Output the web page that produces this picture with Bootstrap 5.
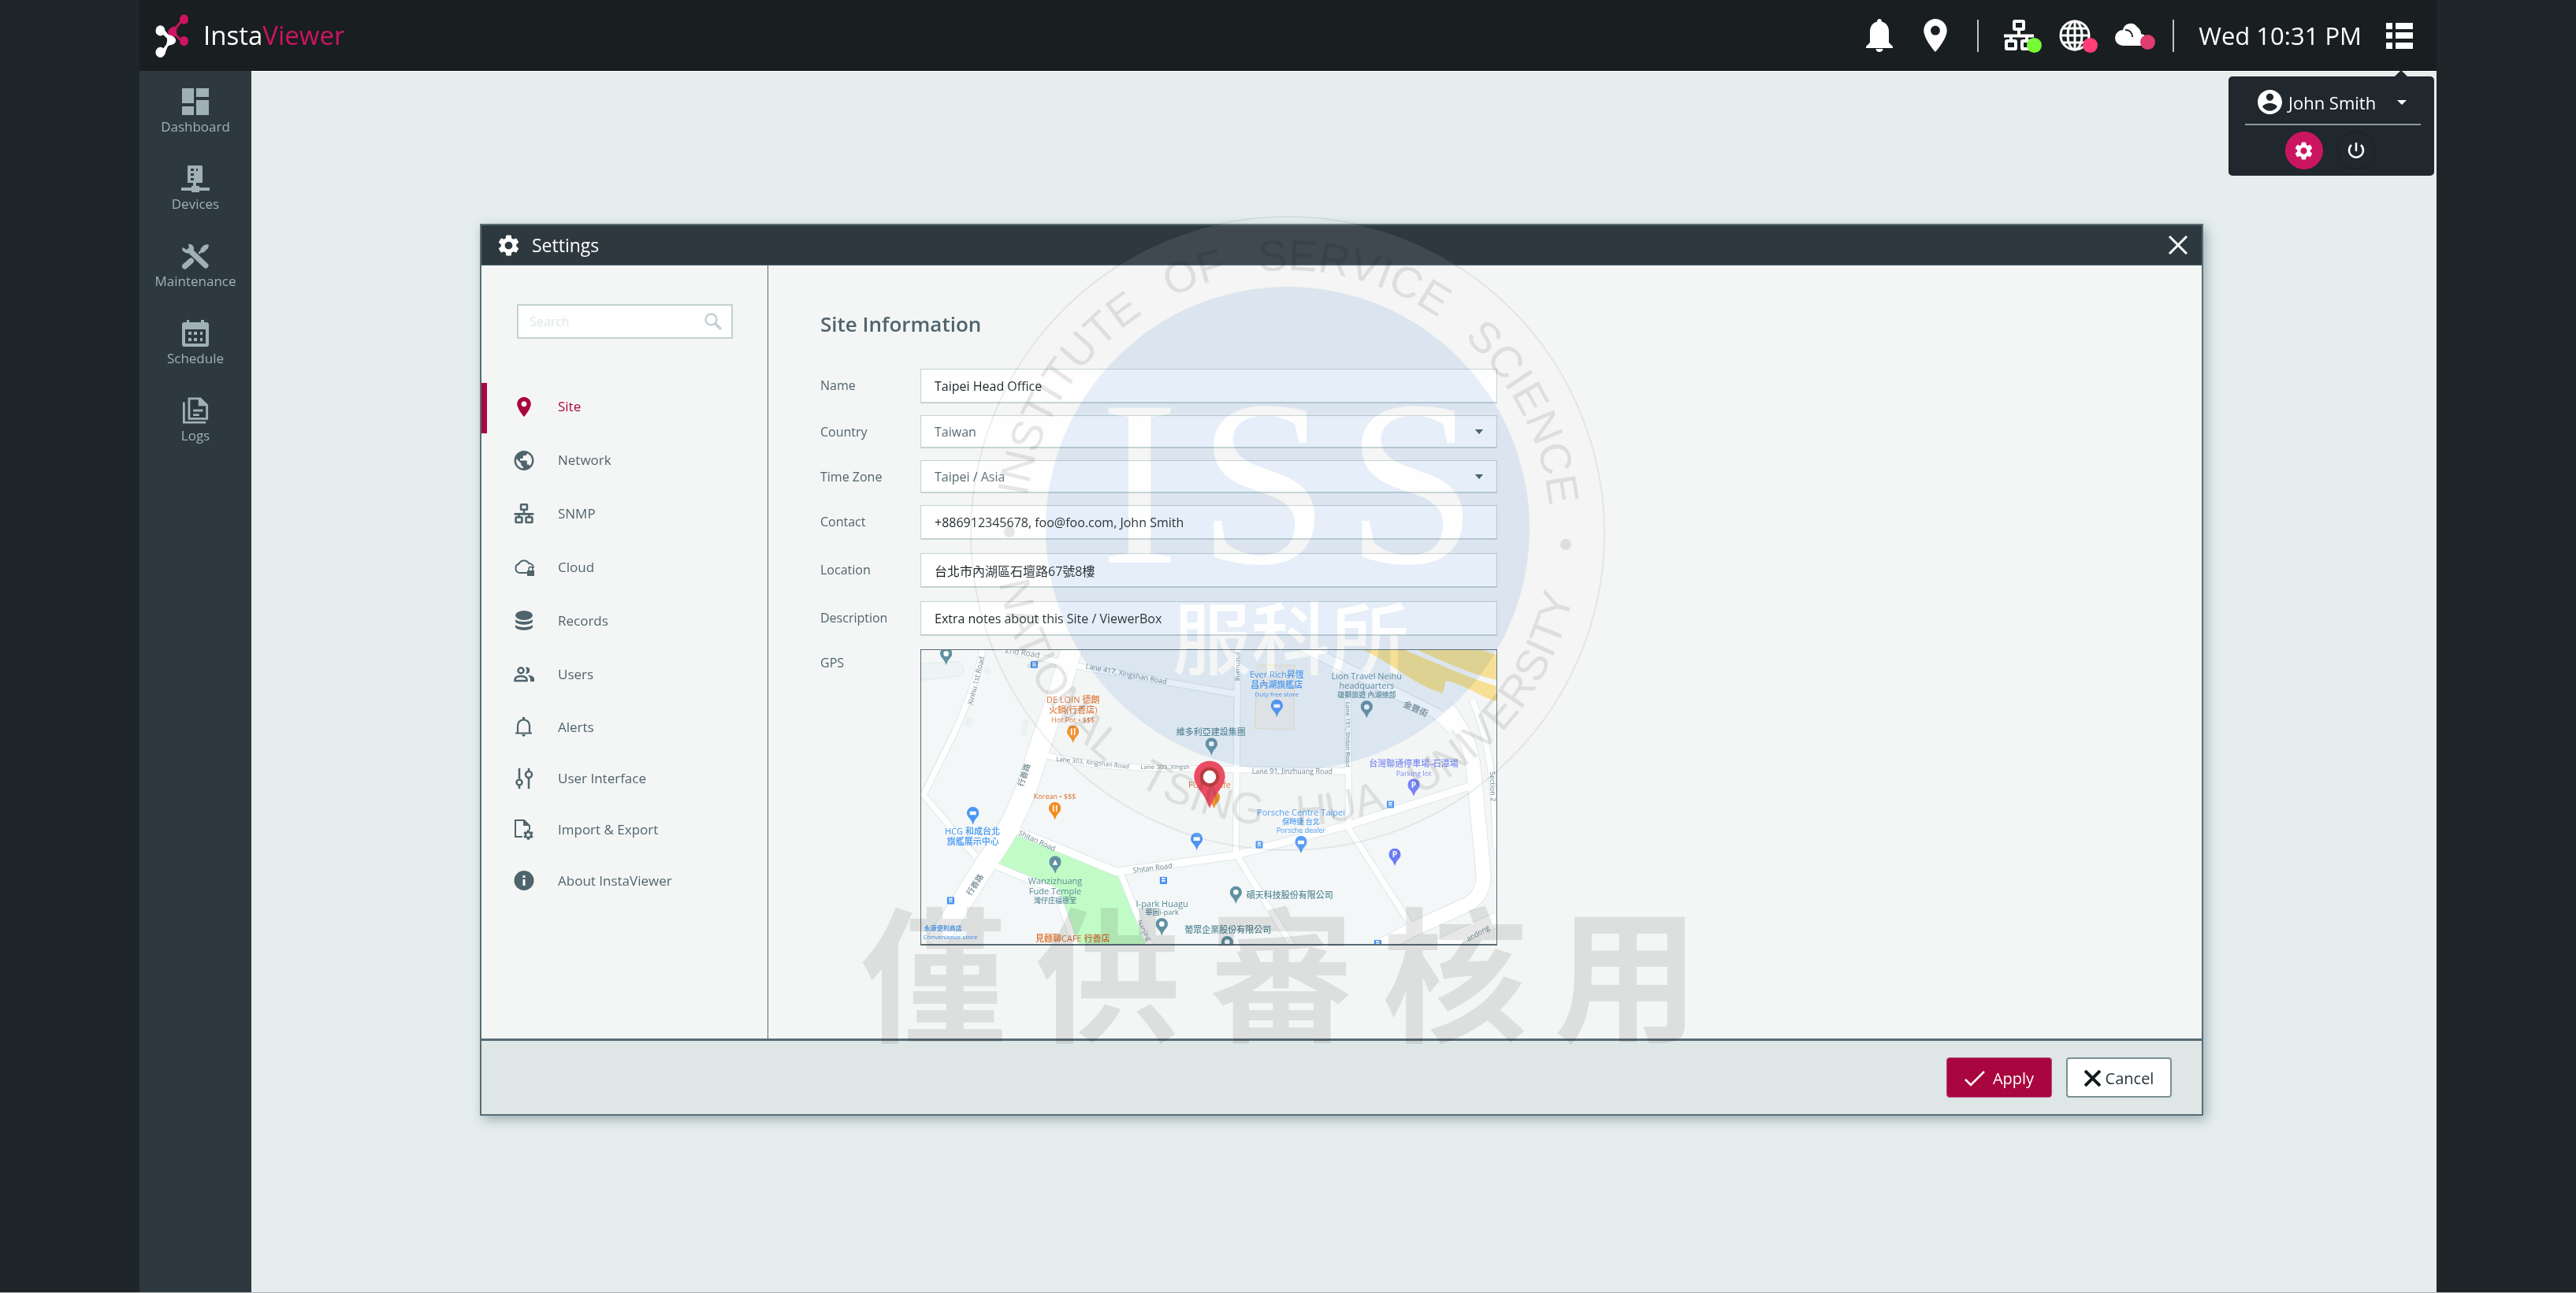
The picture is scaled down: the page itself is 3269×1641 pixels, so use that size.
<!DOCTYPE html>
<html lang="en">
<head>
<meta charset="utf-8">
<meta name="viewport" content="width=device-width, initial-scale=1">
<title>InstaViewer – Settings</title>
<link href="https://cdn.jsdelivr.net/npm/bootstrap@5.3.0/dist/css/bootstrap.min.css" rel="stylesheet">
<style>
  :root {
    --ink: #1f2629; --bar: #191e20; --slate: #2e393f; --line: #586c75; --soft: #c3d1d2;
    --pink: #cc1560; --wine: #a9063f; --label: #4f646d;
  }
  body { background: var(--ink); font-family: "Open Sans", "Noto Sans CJK TC", sans-serif; font-size: 17px; line-height: 22px; color: #1b2326; border-bottom: 1px solid #b0b5b6; }
  svg { display: block; }
  .shell { margin: 0 177px; min-height: calc(100vh - 1px); }
  .topbar { height: 90px; background: var(--bar); color: #fff; padding: 0 30px 0 20px; }
  .brandmark { font-size: 33px; line-height: 40px; color: #fff; text-decoration: none; gap: 18px; }
  .brandmark span span { color: var(--pink); }
  .tools { gap: 31px; }
  .tools-start { gap: 37px; }
  .toolbtn { background: none; border: 0; padding: 0; position: relative; color: #fff; }
  .dot { position: absolute; width: 19px; height: 19px; border-radius: 50%; right: -9px; bottom: -2px; background: #ff3d77; }
  .dot-ok { background: #74fb35; }
  .dot-dim { background: #df3c70; }
  .vline { width: 2px; height: 41px; background: #b9c3c5; }
  .clock { font-size: 31px; line-height: 40px; }
  .rail { width: 142px; background: var(--slate); padding-top: 22px; }
  .rail a { color: #9fb1b7; text-decoration: none; padding-bottom: 38px; gap: 4px; }
  .rail svg { height: 34px; }
  .stage { background: #e5eeed; border-top: 1px solid #fff; padding: 193px 296px 220px 290px; }
  .usermenu { position: absolute; right: 3px; top: 6px; width: 261px; height: 126px; background: #20272d; border-radius: 5px; color: #fff; padding: 17px 17px 0 21px; }
  .usermenu::before { content: ""; position: absolute; right: 34px; top: -8px; border: 8px solid transparent; border-top: 0; border-bottom-color: #20272d; }
  .userrow { border: 0; border-bottom: 2px solid #87999b; background: none; color: #fff; font-size: 22px; line-height: 30px; padding: 0 18px 12px 15px; gap: 7px; }
  .userkeys { gap: 18px; padding: 8px 8px 0 0; }
  .roundbtn { width: 48px; height: 48px; border-radius: 50%; border: 1px solid #1a2024; background: none; color: #fff; padding: 0; }
  .roundbtn.on { background: var(--pink); border-color: var(--pink); }
  .pane { border: 2px solid var(--line); box-shadow: 4px 5px 14px rgba(70, 95, 105, .45); background: #f4f6f5; position: relative; }
  .pane-head { height: 51px; background: var(--slate); color: #fff; border-bottom: 1px solid var(--line); padding: 0 18px 0 21px; }
  .pane-head h1 { font-size: 23px; line-height: 30px; font-weight: 400; }
  .pane-foot { background: #dee6e6; border-top: 3px solid var(--line); padding: 21px 38px 21px 0; gap: 18px; }
  .act { height: 51px; width: 134px; border-radius: 4px; font-size: 20px; line-height: 28px; padding: 2px 0 0; }
  .act-apply { background: var(--wine); border: 1px solid #b54a7d; color: #fff; gap: 10px; }
  .act-cancel { background: #fff; border: 2px solid #7c9094; color: #27343a; gap: 6px; }
  .side { width: 364px; border-right: 1px solid var(--line); padding-top: 49px; }
  .searchbox { margin: 0 44px 52px 45px; height: 44px; border: 2px solid var(--soft); background: #fff; padding: 0 12px 0 14px; }
  .searchbox input { border: 0; outline: 0; min-width: 0; background: none; color: var(--label); font-size: 16px; }
  .searchbox input::placeholder { color: #dfe7e7; opacity: 1; }
  .menu a { height: 68px; color: var(--label); text-decoration: none; padding-left: 41px; gap: 30px; position: relative; }
  .menu li:nth-child(n+7) a { height: 65px; }
  .menu a.current { color: var(--wine); }
  .menu a.current::before { content: ""; position: absolute; left: 0; top: 4px; bottom: 0; width: 7px; background: var(--wine); }
  .sheet { padding: 56px 66px 118px 66px; }
  .sheet h2 { font-size: 26px; line-height: 36px; font-weight: 600; color: var(--label); margin-bottom: 39px; }
  .fields { display: grid; gap: 15px; max-width: 859px; }
  .fields + .fields { gap: 17px; margin-top: 17px; }
  .fieldrow { display: grid; grid-template-columns: 127px 1fr; }
  .fieldrow > label, .fieldrow > .maplabel { color: var(--label); font-size: 16px; line-height: 42px; font-weight: 500; }
  .fieldrow > .maplabel { line-height: 34px; }
  .box { height: 44px; border: 1px solid var(--soft); border-bottom-width: 2px; border-radius: 0; padding: 0 17px; font-size: 16px; background-color: #fff; color: #1b2326; }
  select.box { height: 42px; color: #566a72; background-position: right 16px center; background-size: 12px 6px;
    background-image: url("data:image/svg+xml,%3csvg xmlns='http://www.w3.org/2000/svg' viewBox='0 0 14 7'%3e%3cpath d='M1 0h12L7 7z' fill='%23425a68'/%3e%3c/svg%3e"); }
  .mapbox { border: 1px solid var(--line); border-bottom-width: 2px; }
  .mapbox svg { font-family: "Open Sans", "Noto Sans CJK TC", sans-serif; }
  .seal { position: absolute; left: 479px; top: -16px; width: 1060px; height: 1060px; pointer-events: none; }
  .seal-ink { mix-blend-mode: multiply; }
</style>
</head>
<body>
<svg width="0" height="0" class="position-absolute" aria-hidden="true">
  <defs>
    <symbol id="gear" viewBox="2 2 20 20"><path fill="currentColor" d="M19.14,12.94c0.04-0.3,0.06-0.61,0.06-0.94c0-0.32-0.02-0.64-0.07-0.94l2.03-1.58c0.18-0.14,0.23-0.41,0.12-0.61l-1.92-3.32c-0.12-0.22-0.37-0.29-0.59-0.22l-2.39,0.96c-0.5-0.38-1.03-0.7-1.62-0.94L14.4,2.81c-0.04-0.24-0.24-0.41-0.48-0.41h-3.84c-0.24,0-0.43,0.17-0.47,0.41L9.25,5.35C8.66,5.59,8.12,5.92,7.63,6.29L5.24,5.33c-0.22-0.08-0.47,0-0.59,0.22L2.74,8.87C2.62,9.08,2.66,9.34,2.86,9.48l2.03,1.58C4.84,11.36,4.8,11.69,4.8,12s0.02,0.64,0.07,0.94l-2.03,1.58c-0.18,0.14-0.23,0.41-0.12,0.61l1.92,3.32c0.12,0.22,0.37,0.29,0.59,0.22l2.39-0.96c0.5,0.38,1.03,0.7,1.62,0.94l0.36,2.54c0.05,0.24,0.24,0.41,0.48,0.41h3.84c0.24,0,0.44-0.17,0.47-0.41l0.36-2.54c0.59-0.24,1.13-0.56,1.62-0.94l2.39,0.96c0.22,0.08,0.47,0,0.59-0.22l1.92-3.32c0.12-0.22,0.07-0.47-0.12-0.61L19.14,12.94z M12,15.6c-1.98,0-3.6-1.62-3.6-3.6s1.62-3.6,3.6-3.6s3.6,1.62,3.6,3.6S13.98,15.6,12,15.6z"/></symbol>
    <symbol id="place" viewBox="5 2 14 20"><path fill="currentColor" d="M12 2C8.13 2 5 5.13 5 9c0 5.25 7 13 7 13s7-7.75 7-13c0-3.87-3.13-7-7-7zm0 9.8c-1.55 0-2.8-1.25-2.8-2.8s1.25-2.8 2.8-2.8 2.8 1.25 2.8 2.8-1.25 2.8-2.8 2.8z"/></symbol>
    <symbol id="lan" viewBox="0 0 40 40"><g fill="none" stroke="currentColor" stroke-width="4"><rect x="14" y="2" width="12" height="10" rx="1"/><path d="M20 12v8M1 20.500h38M10 20v7M30 20v7"/><rect x="4" y="27" width="12" height="10" rx="1"/><rect x="24" y="27" width="12" height="10" rx="1"/></g></symbol>
    <symbol id="pin" viewBox="0 0 46 68"><path fill="currentColor" d="M23 0A23 23 0 0 0 0 23c0 14 12 20 17 30q4 8 6 15q2-7 6-15c5-10 17-16 17-30A23 23 0 0 0 23 0z"/></symbol>
    <symbol id="bus" viewBox="0 0 28 28"><rect width="28" height="28" rx="4" fill="#3f8ef2"/><path d="M7 5h14v5H7zM7 13h14v5H7zM8 20h3v3H8zM17 20h3v3h-3z" fill="#fff"/></symbol>
  </defs>
</svg>

<div class="shell d-flex flex-column">
  <header class="topbar d-flex align-items-center justify-content-between">
    <a class="brandmark d-flex align-items-center" href="#">
      <svg width="43" height="55" viewBox="0 0 43 50" preserveAspectRatio="none" aria-hidden="true">
        <g fill="#cc1560"><circle cx="36.500" cy="6" r="5.500"/><circle cx="36.500" cy="31" r="5.500"/><path d="M34 9L28 16c-1.500 2-1 6 0 8l6 5-2 2-6-5c-3-1-8-1-10-4 0-5 5-8 10-8l6-7z"/></g>
        <g fill="#fff"><circle cx="6.500" cy="19" r="6"/><circle cx="6.500" cy="44" r="6"/><path d="M9 15l7 8c3 2 7 1 10 6 1 5-4 6-8 7-3 1-4 6-6 11l-4-5 6-7c1-3 2-6 0-8l-6-5z"/></g>
      </svg>
      <span>Insta<span>Viewer</span></span>
    </a>
    <div class="tools d-flex align-items-center">
      <div class="tools-start d-flex align-items-center">
        <button class="toolbtn" aria-label="Notifications"><svg width="36" height="42" viewBox="0 0 36 42"><path fill="#fff" d="M18 0c2 0 3 1.500 3 3.500 6 1.500 9 6.500 9 12.500v14l5 5v2H1v-2l5-5V16c0-6 3-11 9-12.500C15 1.500 16 0 18 0zM13.500 38h9c0 2.500-2 4-4.500 4s-4.500-1.500-4.500-4z"/></svg></button>
        <button class="toolbtn" aria-label="Location"><svg width="32" height="42"><use href="#place"/></svg></button>
        <span class="vline"></span>
      </div>
      <button class="toolbtn" aria-label="Local network"><svg width="40" height="40"><use href="#lan"/></svg><span class="dot dot-ok"></span></button>
      <button class="toolbtn" aria-label="Internet"><svg width="40" height="40" viewBox="0 0 40 40" fill="none" stroke="#fff" stroke-width="3"><circle cx="20" cy="20" r="18"/><ellipse cx="20" cy="20" rx="9" ry="18"/><path d="M20 2v36M2 20h36M5 11h30M5 29h30"/></svg><span class="dot"></span></button>
      <button class="toolbtn" aria-label="Cloud"><svg width="42" height="32" viewBox="0 0 42 32"><path fill="#fff" d="M10 29a10 10 0 0 1 0-20 10 10 0 0 1 18-4c4 3 5 6 5 9 5 1 8 4 8 8 0 5-4 7-8 7z"/><path d="M13 9c6 0 9 4 9 9" fill="none" stroke="#191e20" stroke-width="2"/></svg><span class="dot dot-dim"></span></button>
      <span class="vline"></span>
      <span class="clock">Wed 10:31 PM</span>
      <button class="toolbtn" aria-label="Menu"><svg width="34" height="33" viewBox="0 0 34 33"><path fill="#fff" d="M0 0h8v8H0zM12 0h22v8H12zM0 12h8v8H0zM12 12h22v8H12zM0 25h8v8H0zM12 25h22v8H12z"/></svg></button>
    </div>
  </header>

  <div class="d-flex flex-grow-1">
    <nav class="rail d-flex flex-column flex-shrink-0" aria-label="Main">
      <a class="d-flex flex-column align-items-center" href="#"><svg width="34" viewBox="0 0 34 34" fill="currentColor"><path d="M0 0h15v19H0zM18 0h16v11H18zM0 23h15v11H0zM18 15h16v19H18z"/></svg>Dashboard</a>
      <a class="d-flex flex-column align-items-center" href="#"><svg width="36" viewBox="0 0 36 34"><path fill="currentColor" fill-rule="evenodd" d="M9 0h16q2 0 2 2v20h-8v4h4v2h13v4H23v2H13v-2H0v-4h13v-2h2v-4H8V2q0-2 1-2zM12 4v3h4V4zM12 10v3h4v-3zM12 16v3h4v-3zM19 4v3h2V4z"/></svg>Devices</a>
      <a class="d-flex flex-column align-items-center" href="#"><svg width="34" viewBox="0 0 34 34"><g stroke="currentColor" fill="none" stroke-linecap="round"><path d="M30 29L12 12" stroke-width="7"/><path d="M3.500 30l8-7" stroke-width="7"/><path d="M29 6l-7 7" stroke-width="2.500"/></g><path fill="currentColor" d="M24 7l4-4 5-1 1 1-1 4-5 5-3 1-2-2zM8 2c5-1 9 4 6 9-4 4-11 3-14-2l1-3 5 3 3-3z"/></svg>Maintenance</a>
      <a class="d-flex flex-column align-items-center" href="#"><svg width="34" viewBox="0 0 34 34"><path fill="currentColor" fill-rule="evenodd" d="M6 0h3v3h15V0h4v3h3q3 0 3 3v25q0 3-3 3H3q-3 0-3-3V6q0-3 3-3h3zM4 12v18h26V12z"/><path fill="currentColor" d="M8 15h4v4H8zM15 15h4v4h-4zM23 15h3v4h-3zM8 23h4v4H8zM15 23h4v4h-4zM23 23h3v4h-3z"/></svg>Schedule</a>
      <a class="d-flex flex-column align-items-center" href="#"><svg width="34" viewBox="0 0 34 36"><g fill="none" stroke="currentColor" stroke-width="3"><path d="M8.500 2h15l9 9v18h-24zM1.500 7v27H31"/><path d="M14 18h13M14 24h8"/></g><path fill="currentColor" d="M21 2h4l8 8v2H21z"/></svg>Logs</a>
    </nav>

    <main class="stage flex-grow-1 position-relative">
      <div class="usermenu">
        <button class="userrow d-flex align-items-center w-100">
          <svg width="33" height="31" viewBox="2 2 20 20" fill="#fff"><path d="M12 2C6.480 2 2 6.480 2 12s4.480 10 10 10 10-4.480 10-10S17.520 2 12 2zm0 3c1.660 0 3 1.340 3 3s-1.340 3-3 3-3-1.340-3-3 1.340-3 3-3zm0 14.200c-2.500 0-4.710-1.280-6-3.220.03-1.990 4-3.080 6-3.080 1.990 0 5.970 1.090 6 3.080-1.290 1.940-3.500 3.220-6 3.220z"/></svg>
          <span>John Smith</span>
          <svg class="ms-auto" width="12" height="6" viewBox="0 0 12 6" fill="#fff"><path d="M0 0h12L6 6z"/></svg>
        </button>
        <div class="userkeys d-flex justify-content-center">
          <button class="roundbtn on d-flex align-items-center justify-content-center" aria-label="Settings"><svg width="23" height="23"><use href="#gear"/></svg></button>
          <button class="roundbtn d-flex align-items-center justify-content-center" aria-label="Power"><svg width="24" height="24" viewBox="0 0 24 24" fill="none" stroke="#fff" stroke-width="2.500"><path d="M12 2v11M6 5a9 9 0 1 0 12 0"/></svg></button>
        </div>
      </div>

      <section class="pane">
        <div class="pane-head d-flex align-items-center justify-content-between">
          <div class="d-flex align-items-center gap-3">
            <svg width="27" height="29"><use href="#gear"/></svg>
            <h1 class="m-0">Settings</h1>
          </div>
          <button class="toolbtn" aria-label="Close"><svg width="24" height="24" viewBox="0 0 24 24" stroke="#fff" stroke-width="3"><path d="M1 1l22 22M23 1L1 23"/></svg></button>
        </div>

        <div class="d-flex">
          <div class="side flex-shrink-0">
            <div class="searchbox d-flex align-items-center">
              <input class="flex-grow-1 p-0" type="search" placeholder="Search" aria-label="Search">
              <svg width="22" height="22" viewBox="0 0 22 22" fill="none" stroke="#c3d1d2"><circle cx="8.500" cy="8.500" r="7" stroke-width="2.500"/><path d="M14 14l7 7" stroke-width="3.500"/></svg>
            </div>
            <ul class="menu list-unstyled m-0">
              <li><a class="current d-flex align-items-center" href="#"><svg width="26" height="25"><use href="#place"/></svg>Site</a></li>
              <li><a class="d-flex align-items-center" href="#"><svg width="26" height="25" viewBox="2 2 20 20" fill="currentColor"><path d="M12 2C6.480 2 2 6.480 2 12s4.480 10 10 10 10-4.480 10-10S17.520 2 12 2zm-1 17.930c-3.950-.49-7-3.850-7-7.930 0-.62.08-1.210.21-1.790L9 15v1c0 1.100.9 2 2 2v1.930zm6.900-2.540c-.26-.81-1-1.390-1.900-1.390h-1v-3c0-.55-.45-1-1-1H8v-2h2c.55 0 1-.45 1-1V7h2c1.100 0 2-.9 2-2v-.41c2.930 1.190 5 4.060 5 7.410 0 2.080-.8 3.970-2.100 5.390z"/></svg>Network</a></li>
              <li><a class="d-flex align-items-center" href="#"><svg width="26" height="26"><use href="#lan"/></svg>SNMP</a></li>
              <li><a class="d-flex align-items-center" href="#"><svg width="26" height="24" viewBox="0 0 26 24"><path d="M17 19H7a6 6 0 0 1-.5-11.500A7 7 0 0 1 19 7c4 0 6 3 6 6" fill="none" stroke="currentColor" stroke-width="2"/><path d="M19 16v-2a2.500 2.500 0 0 1 5 0v2" fill="none" stroke="currentColor" stroke-width="1.500"/><path fill="currentColor" d="M17 16h9v7h-9z"/></svg>Cloud</a></li>
              <li><a class="d-flex align-items-center" href="#"><svg width="26" height="26" viewBox="0 0 26 26" fill="currentColor"><ellipse cx="13" cy="6" rx="11" ry="6"/><path d="M2 11c3 4 19 4 22 0v3c-3 5-19 5-22 0zM2 18c3 4 19 4 22 0v3c-3 5-19 5-22 0z"/></svg>Records</a></li>
              <li><a class="d-flex align-items-center" href="#"><svg width="26" height="20" viewBox="0 0 26 20"><g fill="none" stroke="currentColor" stroke-width="2.500"><circle cx="9" cy="5" r="3.500"/><path d="M1.500 18v-2c1-5 14-5 15 0v2z"/></g><path fill="currentColor" d="M15 1c7-2 7 9 0 8q3-4 0-8zM18 11c5 0 8 2 8 5v3h-5v-3q0-3-3-5z"/></svg>Users</a></li>
              <li><a class="d-flex align-items-center" href="#"><svg width="26" height="25" viewBox="0 0 26 25"><path d="M5 20V11c0-10 15-10 15 0v9M2 20.500h21" fill="none" stroke="currentColor" stroke-width="2.200"/><path fill="currentColor" d="M11 0h3v4h-3zM10 22h5q-1 3-2.500 3T10 22z"/></svg>Alerts</a></li>
              <li><a class="d-flex align-items-center" href="#"><svg width="26" height="26" viewBox="0 0 26 26" fill="none" stroke="currentColor" stroke-width="2.500"><path d="M7 0v13M7 22v4M19 0v4M19 12v14"/><circle cx="7" cy="18" r="3.500"/><circle cx="19" cy="8" r="4"/></svg>User Interface</a></li>
              <li><a class="d-flex align-items-center" href="#"><svg width="26" height="26" viewBox="0 0 26 26"><path d="M11 22H2V1h11l7 7v5" fill="none" stroke="currentColor" stroke-width="2"/><path d="M12 0l8 8h-8z" fill="currentColor"/><svg x="12" y="13" width="13" height="13"><use href="#gear"/></svg></svg>Import &amp; Export</a></li>
              <li><a class="d-flex align-items-center" href="#"><svg width="26" height="25" viewBox="0 0 26 25"><circle cx="13" cy="12.500" r="12.500" fill="currentColor"/><path d="M11.500 6h3v3h-3zM11.500 11h3v8h-3z" fill="#fff"/></svg>About InstaViewer</a></li>
            </ul>
          </div>

          <form class="sheet flex-grow-1">
            <h2>Site Information</h2>
            <div class="fields">
              <div class="fieldrow"><label for="f-name">Name</label><input id="f-name" class="form-control box" type="text" value="Taipei Head Office"></div>
              <div class="fieldrow"><label for="f-country">Country</label><select id="f-country" class="form-select box"><option>Taiwan</option></select></div>
              <div class="fieldrow"><label for="f-zone">Time Zone</label><select id="f-zone" class="form-select box"><option>Taipei / Asia</option></select></div>
              <div class="fieldrow"><label for="f-contact">Contact</label><input id="f-contact" class="form-control box" type="text" value="+886912345678, foo@foo.com, John Smith"></div>
            </div>
            <div class="fields">
              <div class="fieldrow"><label for="f-loc">Location</label><input id="f-loc" class="form-control box" type="text" value="台北市內湖區石壇路67號8樓"></div>
              <div class="fieldrow"><label for="f-desc">Description</label><input id="f-desc" class="form-control box" type="text" value="Extra notes about this Site / ViewerBox"></div>
              <div class="fieldrow">
                <span class="maplabel">GPS</span>
                <div class="mapbox">
                  <svg width="100%" viewBox="27 48 2190 1119" role="img" aria-label="Map of the site">
                    <rect x="0" y="0" width="2300" height="1200" fill="#f4f7f7"/>
                    <path d="M27 100L160 92q30 8 30 30t-30 27L27 163z" fill="#eef4f3" stroke="#dcebe9" stroke-width="3"/>
                    <path d="M415 310l22 4-12 62-22-6zM200 302l26 8-10 34-24-8zM268 110l24 6-4 26-22-4z" fill="#eaf1f1"/>
                    <path d="M1307 105h142l-4 247-148-6z" fill="#f6f2ec" stroke="#f3e5c0" stroke-width="3"/>
                    <path d="M385 735L770 900 890 1170H625L540 955 310 862z" fill="#c1fcc6"/>
                    <g fill="none" stroke-linejoin="round">
                      <g stroke="#dde7e9">
                        <path stroke-width="28" d="M262 40L245 120Q210 240 150 370L36 600 235 835M300 35L600 105 1220 215M505 450Q700 500 1060 500L1650 510M1232 40L1225 830M1652 235L1655 720M310 870L540 965 615 1175M1230 830L1440 1175M1650 720L1895 1100M2125 240Q2210 420 2215 800M785 895L900 1180"/>
                        <path stroke-width="34" d="M390 735L770 892 1220 830 1650 715 2130 562"/>
                        <path stroke-width="44" d="M1470 30L1990 290 2050 350"/>
                        <path stroke-width="60" d="M2030 270C2110 380 2130 440 2135 560L2168 900Q2170 980 2110 1015L1890 1115 1780 1175M2217 1075L2000 1175"/>
                        <path stroke-width="84" d="M600 40C560 200 500 350 470 440 430 590 370 730 280 850L80 1170"/>
                      </g>
                      <g stroke="#fff">
                        <path stroke-width="22" d="M262 40L245 120Q210 240 150 370L36 600 235 835M300 35L600 105 1220 215M505 450Q700 500 1060 500L1650 510M1232 40L1225 830M1652 235L1655 720M310 870L540 965 615 1175M1230 830L1440 1175M1650 720L1895 1100M2125 240Q2210 420 2215 800M785 895L900 1180"/>
                        <path stroke-width="28" d="M390 735L770 892 1220 830 1650 715 2130 562"/>
                        <path stroke-width="38" d="M1470 30L1990 290 2050 350"/>
                        <path stroke-width="54" d="M2030 270C2110 380 2130 440 2135 560L2168 900Q2170 980 2110 1015L1890 1115 1780 1175M2217 1075L2000 1175"/>
                        <path stroke-width="78" d="M600 40C560 200 500 350 470 440 430 590 370 730 280 850L80 1170"/>
                      </g>
                    </g>
                    <path fill="#f8df8c" d="M1710 40H1850C1970 90 2100 150 2217 185V243C2140 220 2100 180 2025 165L2012 212C1900 180 1840 110 1710 47zM1915 40H2140L2217 66V162C2120 140 2010 90 1915 47z"/>
                    <g fill="#6b848b" font-size="30" font-weight="500">
                      <text transform="translate(222 258) rotate(-76)" font-size="27">Xinhu 1st Road</text>
                      <text transform="translate(345 56) rotate(10)">2nd Road</text>
                      <text transform="translate(652 118) rotate(11)" font-size="27">Lane 417, Xingshan Road</text>
                      <text transform="translate(540 470) rotate(6)" font-size="24">Lane 303, Xingshan Road</text>
                      <text x="862" y="502" font-size="24">Lane 303, Xingsh</text>
                      <text transform="translate(415 570) rotate(-72)">行善路</text>
                      <text transform="translate(215 985) rotate(-56)">行善路</text>
                      <text transform="translate(396 750) rotate(25)" font-size="27">Shitan Road</text>
                      <text transform="translate(834 896) rotate(-7)" font-size="27">Shitan Road</text>
                      <text transform="translate(850 1080) rotate(64)" font-size="24">Nanjing</text>
                      <text transform="translate(1226 56) rotate(90)" font-size="24">Jinzhuang</text>
                      <text x="1286" y="518" font-size="27">Lane 91, Jinzhuang Road</text>
                      <text transform="translate(1644 245) rotate(90)" font-size="24">Lane 151, Shitan Road</text>
                      <text transform="translate(1860 262) rotate(24)" font-size="33">金豐街</text>
                      <text transform="translate(2192 510) rotate(88)" font-size="27">Section 2</text>
                      <text transform="translate(2110 1158) rotate(-30)" font-size="27">andong</text>
                    </g>
                    <g color="#4b96f3">
                      <use href="#pin" x="201" y="645" width="46" height="68"/><use href="#pin" x="1053" y="743" width="46" height="68"/><use href="#pin" x="1358" y="236" width="46" height="68"/><use href="#pin" x="1450" y="755" width="46" height="68"/>
                    </g>
                    <path fill="#fff" d="M212 662h24v14h-24zM1064 760h24v14h-24zM1369 254h24v14h-24zM1461 773h24v14h-24z"/>
                    <g color="#6191a0">
                      <use href="#pin" x="99" y="38" width="46" height="68"/><use href="#pin" x="1109" y="382" width="46" height="68"/><use href="#pin" x="514" y="832" width="46" height="68"/><use href="#pin" x="920" y="1068" width="46" height="68"/><use href="#pin" x="1700" y="240" width="46" height="68"/><use href="#pin" x="1202" y="947" width="46" height="68"/><use href="#pin" x="1169" y="1137" width="46" height="68"/>
                    </g>
                    <g fill="#fff"><circle cx="122" cy="62" r="10"/><circle cx="1132" cy="405" r="10"/><path d="M527 866l10-20 10 20z"/><circle cx="943" cy="1091" r="10"/><circle cx="1723" cy="265" r="10"/><circle cx="1225" cy="970" r="10"/><circle cx="1192" cy="1160" r="10"/></g>
                    <g color="#f08a1d"><use href="#pin" x="582" y="335" width="46" height="68"/><use href="#pin" x="513" y="627" width="46" height="68"/><use href="#pin" x="1119" y="585" width="46" height="68"/></g>
                    <g stroke="#fff" stroke-width="5"><path d="M599 346v26M611 346v26M530 638v26M542 638v26"/></g>
                    <g color="#6a7cf5"><use href="#pin" x="1879" y="538" width="46" height="68"/><use href="#pin" x="1807" y="803" width="46" height="68"/></g>
                    <g fill="#fff" font-size="30" font-weight="700" text-anchor="middle"><text x="1902" y="572">P</text><text x="1830" y="837">P</text></g>
                    <use href="#bus" x="443" y="90" width="28" height="28"/><use href="#bus" x="125" y="988" width="28" height="28"/><use href="#bus" x="935" y="911" width="28" height="28"/><use href="#bus" x="1799" y="622" width="28" height="28"/><use href="#bus" x="1300" y="775" width="28" height="28"/><use href="#bus" x="1751" y="1151" width="28" height="28"/>
                    <g text-anchor="middle" font-size="33" font-weight="500">
                      <g fill="#dc6f2c"><text x="605" y="249">DE LOIN 德朗</text><text x="605" y="289">火鍋(行善店)</text><text x="605" y="323" font-size="27">Hot Pot • $$$</text><text x="536" y="614" font-size="27">Korean • $$$</text><text x="1125" y="574">FUJIN Cafe</text><text x="604" y="1158">見麵聊CAFE 行善店</text></g>
                      <g fill="#3f96f4"><text x="222" y="750">HCG 和成台北</text><text x="224" y="790">旗艦展示中心</text><text x="110" y="1116" font-size="24">永康便利商店</text><text x="138" y="1149" font-size="24">Convenience store</text><text x="1381" y="152">Ever Rich昇恆</text><text x="1381" y="193">昌內湖旗艦店</text><text x="1381" y="225" font-size="24">Duty free store</text><text x="1473" y="679">Porsche Centre Taipei</text><text x="1473" y="712" font-size="27">保時捷 台北</text><text x="1473" y="743" font-size="27">Porsche dealer</text></g>
                      <g fill="#5a8b98"><text x="537" y="938">Wanzizhuang</text><text x="537" y="977">Fude Temple</text><text x="537" y="1011" font-size="27">灣仔庄福德堂</text><text x="944" y="1025">I-park Huagu</text><text x="944" y="1057" font-size="27">華固i-park</text><text x="1130" y="371">維多利亞建設集團</text><text x="1723" y="158">Lion Travel Neihu</text><text x="1723" y="196">headquarters</text><text x="1723" y="229" font-size="27">雄獅旅遊 內湖總部</text><text x="1430" y="994">碩天科技股份有限公司</text><text x="1195" y="1124">葡眾企業股份有限公司</text></g>
                      <g fill="#7383f0"><text x="1902" y="493">台灣聯通停車場-石潭場</text><text x="1902" y="527" font-size="27">Parking lot</text></g>
                    </g>
                    <path fill="#e93d55" d="M1125 470c-33 0-59 26-59 59 0 38 36 62 50 100q5 12 9 21 4-9 9-21c14-38 50-62 50-100 0-33-26-59-59-59z"/>
                    <circle cx="1125" cy="531" r="31" fill="#fff" stroke="#b52a31" stroke-width="13"/>
                  </svg>
                </div>
              </div>
            </div>
          </form>
        </div>

        <div class="pane-foot d-flex justify-content-end">
          <button class="act act-apply d-flex align-items-center justify-content-center"><svg width="26" height="20" viewBox="0 0 26 20" fill="none" stroke="#fff" stroke-width="2.500"><path d="M1 11l7 7L25 1"/></svg>Apply</button>
          <button class="act act-cancel d-flex align-items-center justify-content-center"><svg width="21" height="21" viewBox="0 0 21 21" stroke="#111a1d" stroke-width="4"><path d="M1 1l19 19M20 1L1 20"/></svg>Cancel</button>
        </div>

        <svg class="seal" viewBox="1090 270 1060 1060" aria-hidden="true"><circle cx="1634" cy="677" r="402" fill="#f4f6f5" fill-opacity=".09"/></svg>
        <svg class="seal seal-ink" viewBox="1090 270 1060 1060">
          <defs>
            <path id="arcTop" d="M1300 677A334 334 0 0 1 1968 677"/>
            <path id="arcLow" d="M1263 677A371 371 0 0 0 2005 677"/>
          </defs>
          <circle cx="1634" cy="677" r="402" fill="none" stroke="#eeefef" stroke-width="2"/>
          <circle cx="1634" cy="671" r="307" fill="#e6effa"/>
          <g fill="#e7e7e7">
            <circle cx="1281" cy="675" r="7"/><circle cx="1987" cy="691" r="7"/>
            <g font-family="Liberation Sans, Arial, sans-serif" font-size="55" text-anchor="middle">
              <text><textPath href="#arcTop" startOffset="18%">INSTITUTE</textPath></text>
              <text><textPath href="#arcTop" startOffset="39%">OF</textPath></text>
              <text><textPath href="#arcTop" startOffset="58%">SERVICE</textPath></text>
              <text><textPath href="#arcTop" startOffset="85%">SCIENCE</textPath></text>
              <text><textPath href="#arcLow" startOffset="17%">NATIONAL</textPath></text>
              <text><textPath href="#arcLow" startOffset="40%">TSING</textPath></text>
              <text><textPath href="#arcLow" startOffset="56%">HUA</textPath></text>
              <text><textPath href="#arcLow" startOffset="79%">UNIVERSITY</textPath></text>
            </g>
            <text x="1093 1314 1534 1754 1972" y="1308" font-family="Noto Sans CJK TC, sans-serif" font-weight="700" font-size="184">僅供審核用</text>
          </g>
          <g fill="#fff">
            <text x="1396 1520 1708" y="714" font-family="Liberation Serif, Times New Roman, serif" font-size="300">ISS</text>
            <text x="1638" y="848" text-anchor="middle" font-family="Noto Sans CJK TC, sans-serif" font-weight="500" font-size="100">服科所</text>
          </g>
        </svg>
      </section>
    </main>
  </div>
</div>
<script src="https://cdn.jsdelivr.net/npm/bootstrap@5.3.0/dist/js/bootstrap.bundle.min.js"></script>
</body>
</html>
